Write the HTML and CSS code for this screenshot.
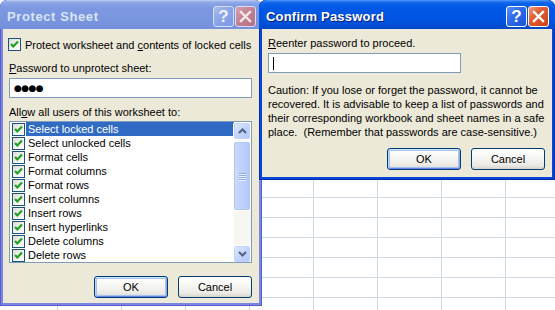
FILE: index.html
```html
<!DOCTYPE html>
<html>
<head>
<meta charset="utf-8">
<title>Protect Sheet</title>
<link rel="stylesheet" href="styles.css">
</head>
<body>
<div class="sheet"></div>

<div class="win inactive protect">
  <div class="titlebar">
    <span class="title">Protect Sheet</span>
    <div class="tbtns">
      <span class="tb help">?</span>
      <span class="tb close"><svg width="21" height="21" viewBox="0 0 21 21"><path d="M6 6 L15 15 M15 6 L6 15" stroke="currentColor" stroke-width="2.4" stroke-linecap="square"/></svg></span>
    </div>
  </div>
  <div class="client">
    <div class="chkrow"><span class="chk"><svg width="11" height="11" viewBox="0 0 11 11"><path d="M2 5 L4.3 7.5 L9 2.5" fill="none" stroke="#21A121" stroke-width="2.2"/></svg></span><span class="chktxt">Protect worksheet and <u>c</u>ontents of locked cells</span></div>
    <div class="lbl l1"><u>P</u>assword to unprotect sheet:</div>
    <div class="field pw">●●●●</div>
    <div class="lbl l2">All<u>o</u>w all users of this worksheet to:</div>
    <div class="list">
      <div class="items">
        <div class="item sel"><span class="chk"><svg width="11" height="11" viewBox="0 0 11 11"><path d="M2 5 L4.3 7.5 L9 2.5" fill="none" stroke="#21A121" stroke-width="2.2"/></svg></span><span class="txt">Select locked cells</span></div>
        <div class="item"><span class="chk"><svg width="11" height="11" viewBox="0 0 11 11"><path d="M2 5 L4.3 7.5 L9 2.5" fill="none" stroke="#21A121" stroke-width="2.2"/></svg></span><span class="txt">Select unlocked cells</span></div>
        <div class="item"><span class="chk"><svg width="11" height="11" viewBox="0 0 11 11"><path d="M2 5 L4.3 7.5 L9 2.5" fill="none" stroke="#21A121" stroke-width="2.2"/></svg></span><span class="txt">Format cells</span></div>
        <div class="item"><span class="chk"><svg width="11" height="11" viewBox="0 0 11 11"><path d="M2 5 L4.3 7.5 L9 2.5" fill="none" stroke="#21A121" stroke-width="2.2"/></svg></span><span class="txt">Format columns</span></div>
        <div class="item"><span class="chk"><svg width="11" height="11" viewBox="0 0 11 11"><path d="M2 5 L4.3 7.5 L9 2.5" fill="none" stroke="#21A121" stroke-width="2.2"/></svg></span><span class="txt">Format rows</span></div>
        <div class="item"><span class="chk"><svg width="11" height="11" viewBox="0 0 11 11"><path d="M2 5 L4.3 7.5 L9 2.5" fill="none" stroke="#21A121" stroke-width="2.2"/></svg></span><span class="txt">Insert columns</span></div>
        <div class="item"><span class="chk"><svg width="11" height="11" viewBox="0 0 11 11"><path d="M2 5 L4.3 7.5 L9 2.5" fill="none" stroke="#21A121" stroke-width="2.2"/></svg></span><span class="txt">Insert rows</span></div>
        <div class="item"><span class="chk"><svg width="11" height="11" viewBox="0 0 11 11"><path d="M2 5 L4.3 7.5 L9 2.5" fill="none" stroke="#21A121" stroke-width="2.2"/></svg></span><span class="txt">Insert hyperlinks</span></div>
        <div class="item"><span class="chk"><svg width="11" height="11" viewBox="0 0 11 11"><path d="M2 5 L4.3 7.5 L9 2.5" fill="none" stroke="#21A121" stroke-width="2.2"/></svg></span><span class="txt">Delete columns</span></div>
        <div class="item"><span class="chk"><svg width="11" height="11" viewBox="0 0 11 11"><path d="M2 5 L4.3 7.5 L9 2.5" fill="none" stroke="#21A121" stroke-width="2.2"/></svg></span><span class="txt">Delete rows</span></div>
      </div>
      <div class="vscroll">
        <div class="sbtn"><svg width="9" height="6" viewBox="0 0 9 6"><path d="M1 5 L4.5 1.5 L8 5" fill="none" stroke="#4D6185" stroke-width="2"/></svg></div>
        <div class="track"><div class="thumb"><span></span><span></span><span></span><span></span></div></div>
        <div class="sbtn"><svg width="9" height="6" viewBox="0 0 9 6"><path d="M1 1 L4.5 4.5 L8 1" fill="none" stroke="#4D6185" stroke-width="2"/></svg></div>
      </div>
    </div>
    <div class="btnrow">
      <button class="btn default">OK</button>
      <button class="btn">Cancel</button>
    </div>
  </div>
</div>

<div class="win active confirm">
  <div class="titlebar">
    <span class="title">Confirm Password</span>
    <div class="tbtns">
      <span class="tb help">?</span>
      <span class="tb close"><svg width="21" height="21" viewBox="0 0 21 21"><path d="M6 6 L15 15 M15 6 L6 15" stroke="currentColor" stroke-width="2.4" stroke-linecap="square"/></svg></span>
    </div>
  </div>
  <div class="client">
    <div class="lbl r1"><u>R</u>eenter password to proceed.</div>
    <div class="field entry"><span class="caret"></span></div>
    <p class="caution">Caution: If you lose or forget the password, it cannot be<br>recovered. It is advisable to keep a list of passwords and<br>their corresponding workbook and sheet names in a safe<br>place.&nbsp; (Remember that passwords are case-sensitive.)</p>
    <div class="btnrow">
      <button class="btn default">OK</button>
      <button class="btn">Cancel</button>
    </div>
  </div>
</div>
</body>
</html>
```

FILE: styles.css
```css
html, body {
  margin: 0;
  padding: 0;
  width: 555px;
  height: 310px;
  overflow: hidden;
  background: #ffffff;
  font-family: "Liberation Sans", Arial, sans-serif;
  font-size: 11px;
  color: #000;
}

.sheet {
  width: 555px;
  height: 310px;
  background-color: #fff;
  background-image:
    linear-gradient(to right, #D0D7E5 1px, transparent 1px),
    linear-gradient(to bottom, #D0D7E5 1px, transparent 1px);
  background-size: 64px 100%, 100% 20px;
  background-position: 57px 0, 0 17px;
}

.win {
  position: absolute;
  top: 0;
  display: flex;
  flex-direction: column;
  border-radius: 7px 7px 0 0;
  overflow: hidden;
}
.win.inactive { background: #7A85DF; box-shadow: inset 0 0 0 1px #5A5ED0; }
.win.active { background: #0846D8; box-shadow: inset 0 0 0 1px #0030B0; }

.protect { left: 0; width: 262px; height: 306px; }
.confirm { left: 259px; width: 296px; height: 180px; }

.titlebar {
  height: 29px;
  flex: none;
  display: flex;
  align-items: center;
  justify-content: space-between;
  padding: 4px 6px 0 7px;
  box-sizing: border-box;
  border-radius: 7px 7px 0 0;
}
.inactive .titlebar {
  background: linear-gradient(to bottom, #C5D3F5 0, #A3B8EE 1px, #8BA3E6 3px, #7D98E0 8px, #7A96DF 60%, #7590DC 100%);
}
.active .titlebar {
  background: linear-gradient(to bottom, #5DA0FF 0, #2F80F6 1px, #0D62E8 3px, #0058E6 8px, #0056E3 55%, #0050D8 85%, #0047C8 100%);
}
.title {
  font-family: "Liberation Sans", Arial, sans-serif;
  font-weight: bold;
  font-size: 13px;
  letter-spacing: 0.2px;
}
.inactive .title { color: #D8E4F8; letter-spacing: 0.6px; }
.active .title { color: #ffffff; text-shadow: 1px 1px 0 #0A1E80; }

.tbtns { display: flex; gap: 1px; }
.tb {
  width: 21px;
  height: 21px;
  box-sizing: border-box;
  border: 1px solid #fff;
  border-radius: 3px;
  display: flex;
  align-items: center;
  justify-content: center;
  color: #fff;
  font-weight: bold;
  font-size: 17px;
  line-height: 1;
}
.tb svg { display: block; margin: -1px; }
.active .help { background: linear-gradient(135deg, #5C90F8 0%, #2A6AEC 45%, #1B52D8 100%); }
.active .close { background: linear-gradient(135deg, #F29A7C 0%, #E25A33 40%, #CC4318 100%); }
.inactive .tb { border-color: #D4DEF8; }
.inactive .help { background: linear-gradient(135deg, #A8BCF0 0%, #8AA3EA 50%, #7E98E6 100%); color: #EEF2FD; }
.inactive .close { background: linear-gradient(135deg, #D8A2AE 0%, #C27F8E 50%, #B27082 100%); color: #F4E8EC; }

.client {
  flex: 1;
  margin: 0 3px 3px 3px;
  background: #ECE9D8;
  display: flex;
  flex-direction: column;
  align-items: flex-start;
}
.protect .client { padding: 9px 7px 0 6px; }
.confirm .client { padding: 8px 7px 0 6px; }

.lbl { line-height: 13px; height: 13px; white-space: nowrap; }
.l1 { margin-top: 11px; }
.l2 { margin-top: 8px; }

.chkrow {
  display: flex;
  align-items: center;
  height: 13px;
  margin-left: -1px;
  white-space: nowrap;
}
.chkrow .chktxt { margin-left: 4px; }

.chk {
  width: 13px;
  height: 13px;
  flex: none;
  box-sizing: border-box;
  border: 1px solid #1C5180;
  background: linear-gradient(135deg, #DCDCD7 0%, #F4F4F0 60%, #FFFFFF 100%);
  display: flex;
  align-items: center;
  justify-content: center;
}
.chk svg { display: block; }

.field {
  box-sizing: border-box;
  height: 20px;
  border: 1px solid #7F9DB9;
  background: #fff;
  display: flex;
  align-items: center;
}
.pw {
  width: 243px;
  margin-top: 3px;
  padding-left: 4px;
  font-family: "DejaVu Sans", sans-serif;
  font-size: 9px;
  letter-spacing: -0.6px;
}
.entry { width: 193px; margin-top: 3px; padding-left: 4px; }
.caret { width: 1px; height: 13px; background: #000; }

.list {
  margin-top: 2px;
  width: 243px;
  height: 142px;
  box-sizing: border-box;
  border: 1px solid #7F9DB9;
  background: #fff;
  display: flex;
  overflow: hidden;
}
.items { flex: 1; display: flex; flex-direction: column; overflow: hidden; }
.item {
  height: 14px;
  flex: none;
  display: flex;
  align-items: center;
  padding-left: 2px;
  white-space: nowrap;
}
.item .chk { margin-top: 1px; }
.item .txt {
  flex: 1;
  height: 14px;
  line-height: 14px;
  margin-left: 1px;
  padding-left: 2px;
}
.item.sel .txt { background: #316AC5; color: #fff; }

.vscroll {
  width: 17px;
  flex: none;
  box-sizing: border-box;
  padding: 1px 1px 0 0;
  background: #F7F6F1;
  display: flex;
  flex-direction: column;
}
.sbtn {
  height: 16px;
  flex: none;
  box-sizing: border-box;
  border: 1px solid #C3D3FD;
  border-radius: 2px;
  background: linear-gradient(135deg, #E0EAFE 0%, #C6D6FB 45%, #B4C8F6 100%);
  display: flex;
  align-items: center;
  justify-content: center;
  box-shadow: 0 0 0 1px #fff;
}
.track { flex: 1; padding: 3px 0 0 0; }
.thumb {
  height: 68px;
  box-sizing: border-box;
  border: 1px solid #B1C6F5;
  border-radius: 2px;
  background: linear-gradient(to right, #CBDAFC 0%, #BED1FB 50%, #B3C8F7 100%);
  box-shadow: 0 0 0 1px #fff;
  display: flex;
  flex-direction: column;
  align-items: center;
  justify-content: center;
  gap: 1px;
}
.thumb span {
  width: 7px;
  height: 1px;
  background: #8CA8E6;
  box-shadow: 0 1px 0 #EEF3FE;
}

.btnrow {
  align-self: stretch;
  display: flex;
  justify-content: flex-end;
  gap: 10px;
}
.protect .btnrow { margin-top: 13px; }
.confirm .btnrow { margin-top: 9px; }

.btn {
  width: 74px;
  height: 22px;
  box-sizing: border-box;
  border: 1px solid #003C74;
  border-radius: 3px;
  background: linear-gradient(to bottom, #FFFFFF 0%, #F7F7F4 40%, #ECEBE6 80%, #D8D3C8 100%);
  font-family: "Liberation Sans", Arial, sans-serif;
  font-size: 11px;
  color: #000;
  padding: 0;
  margin: 0;
}
.btn.default {
  box-shadow: inset 0 1px 0 #CEE7FF, inset 1px 0 0 #BCD4F6, inset -1px 0 0 #89ADE4, inset 0 -1px 0 #6982EE, inset 0 0 0 2px #A8C2F0;
}

.caution {
  margin: 10px 0 0 0;
  line-height: 14px;
  white-space: nowrap;
}
```
